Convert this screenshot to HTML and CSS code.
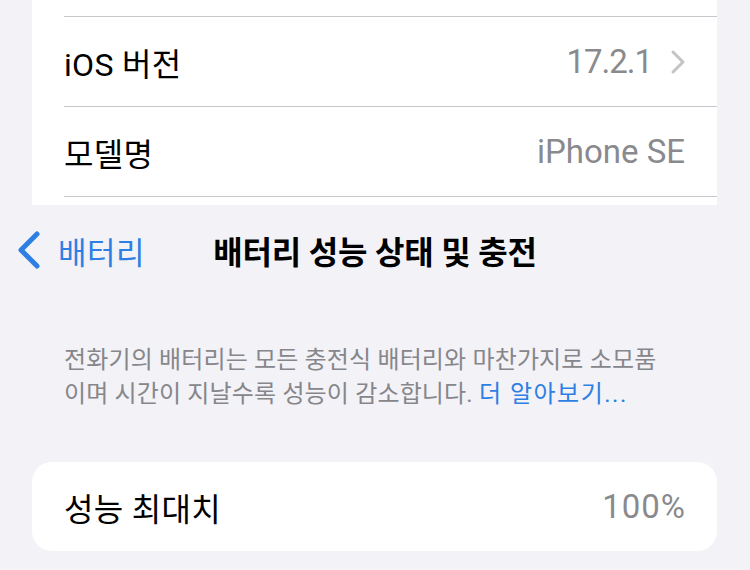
FILE: index.html
```html
<!DOCTYPE html>
<html lang="ko">
<head>
<meta charset="utf-8">
<link rel="stylesheet" href="styles.css">
</head>
<body>
<div class="page">
  <section class="card card-top">
    <div class="stub"></div>
    <div class="row">
      <span class="label">iOS 버전</span>
      <span class="value"><span class="ver">17.2.1</span>
        <svg class="disc" width="16" height="26" viewBox="0 0 16 26"><polyline points="3,3 13,13 3,23" fill="none" stroke="#c4c4c7" stroke-width="3" stroke-linecap="round" stroke-linejoin="round"/></svg>
      </span>
    </div>
    <div class="row">
      <span class="label">모델명</span>
      <span class="value">iPhone SE</span>
    </div>
  </section>

  <nav class="nav">
    <a class="back">
      <svg width="26" height="40" viewBox="0 0 26 40"><polyline points="21,4 5,20 21,36" fill="none" stroke="#2e7fe3" stroke-width="5" stroke-linecap="round" stroke-linejoin="round"/></svg>
      <span class="back-text">배터리</span>
    </a>
    <h1 class="title">배터리 성능 상태 및 충전</h1>
  </nav>

  <p class="desc">전화기의 배터리는 모든 충전식 배터리와 마찬가지로 소모품<br>이며 시간이 지날수록 성능이 감소합니다. <span class="link">더 알아보기...</span></p>

  <section class="card card-bottom">
    <div class="row row-single">
      <span class="label">성능 최대치</span>
      <span class="value pct">100%</span>
    </div>
  </section>
</div>
</body>
</html>
```

FILE: styles.css
```css
* { box-sizing: border-box; }
html, body {
  margin: 0;
  padding: 0;
  background: #f2f2f7;
}
body {
  width: 750px;
  height: 570px;
  overflow: hidden;
  font-family: "Roboto", "Noto Sans CJK KR", sans-serif;
  color: #000;
}
.page {
  display: flex;
  flex-direction: column;
}
.card {
  background: #fff;
  margin: 0 33px 0 32px;
}
.card-top {
  height: 205px;
}
.stub {
  height: 17px;
  margin-left: 32px;
  border-bottom: 1px solid #c8c8cc;
}
.row {
  height: 90px;
  margin-left: 32px;
  padding-right: 32px;
  border-bottom: 1px solid #c8c8cc;
  display: flex;
  align-items: center;
  justify-content: space-between;
}
.label {
  font-size: 32px;
  letter-spacing: 0.3px;
}
.value {
  font-size: 33px;
  color: #8a8a8e;
  display: flex;
  align-items: center;
  gap: 18px;
}
.ver {
  letter-spacing: -1px;
}
.pct {
  letter-spacing: 1px;
  margin-right: -1px;
}
.disc {
  margin-right: -1px;
}
.nav {
  height: 90px;
  display: flex;
  align-items: center;
  position: relative;
}
.back {
  display: flex;
  align-items: center;
  gap: 16px;
  padding-left: 16px;
  color: #2e7fe3;
}
.back-text {
  font-size: 31px;
  letter-spacing: 0.5px;
}
.title {
  position: absolute;
  left: 0;
  right: 0;
  text-align: center;
  margin: 0;
  font-size: 32px;
  font-weight: 700;
  letter-spacing: -0.2px;
  pointer-events: none;
}
.desc {
  margin: 48px 0 0 64px;
  font-size: 24px;
  line-height: 34px;
  letter-spacing: 0.15px;
  color: #86868b;
}
.link {
  color: #2e7fe3;
  letter-spacing: 1.5px;
}
.card-bottom {
  margin-top: 51px;
  border-radius: 20px;
  height: 89px;
}
.row-single {
  height: 89px;
  border-bottom: none;
}
```
